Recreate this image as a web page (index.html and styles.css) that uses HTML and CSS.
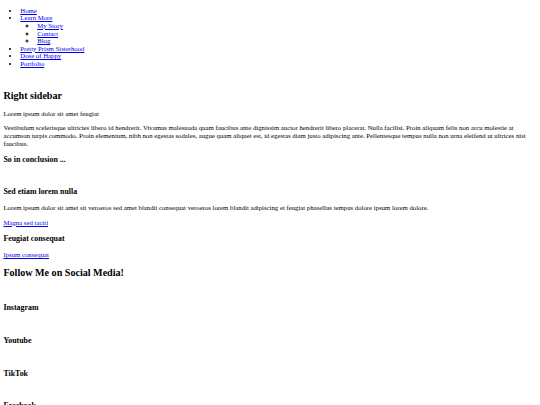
FILE: index.html
```html
<!DOCTYPE html>
<html lang="en">
  <head>
    <meta charset="UTF-8" />
    <meta name="viewport" content="width=device-width, initial-scale=1.0" />
    <title>Right sidebar</title>
    <link rel="stylesheet" href="styles.css">
  </head>
  <body>
    <header class="top">
      <nav class="nav">
        <ul>
          <li><a href="#">Home</a></li>
          <li>
            <a href="#">Learn More</a>
            <ul>
              <li><a href="#">My Story</a></li>
              <li><a href="#">Contact</a></li>
              <li><a href="#">Blog</a></li>
            </ul>
          </li>
          <li><a href="#">Pretty Prism Sisterhood</a></li>
          <li><a href="#">Dose of Happy</a></li>
          <li><a href="#">Portfolio</a></li>
        </ul>
      </nav>
    </header>
    <main class="page">
      <section class="content">
        <h2>Right sidebar</h2>
        <p>Lorem ipsum dolor sit amet feugiat</p>
        <p>Vestibulum scelerisque ultricies libero id hendrerit. Vivamus malesuada quam faucibus ante dignissim auctor hendrerit libero placerat. Nulla facilisi. Proin aliquam felis non arcu molestie at accumsan turpis commodo. Proin elementum, nibh non egestas sodales, augue quam aliquet est, id egestas diam justo adipiscing ante. Pellentesque tempus nulla non urna eleifend ut ultrices nisi faucibus.</p>
        <h3>So in conclusion ...</h3>
      </section>
      <section class="sidebar">
        <h3>Sed etiam lorem nulla</h3>
        <p>Lorem ipsum dolor sit amet sit veroeros sed amet blandit consequat veroeros lorem blandit adipiscing et feugiat phasellus tempus dolore ipsum lorem dolore.</p>
        <p><a href="#">Magna sed taciti</a></p>
        <h3>Feugiat consequat</h3>
        <p><a href="#">Ipsum consequat</a></p>
      </section>
    </main>
    <footer class="social">
      <h2>Follow Me on Social Media!</h2>
      <div class="social-item"><h3>Instagram</h3></div>
      <div class="social-item"><h3>Youtube</h3></div>
      <div class="social-item"><h3>TikTok</h3></div>
      <div class="social-item"><h3>Facebook</h3></div>
    </footer>
  </body>
</html>
```

FILE: styles.css
```css
body {
  margin: 0 3.4px 3.4px;
  font-family: "Liberation Serif", "Times New Roman", serif;
  font-size: 6.75px;
  line-height: 7.6px;
  color: #000;
}
p {
  margin: 6.75px 0;
}
h2 {
  font-size: 10.1px;
  line-height: 11.4px;
  margin: 8.4px 0;
}
h3 {
  font-size: 7.9px;
  line-height: 9.2px;
  margin: 7.9px 0;
}
a {
  color: #0000ee;
}
.nav ul {
  margin: 6.75px 0;
  padding-left: 16.9px;
}
.nav ul ul {
  margin: 0;
}
.page {
  margin-top: 22.75px;
}
.sidebar {
  margin-top: 23.05px;
}
.social-item h3 {
  margin: 23.5px 0;
}
.social-item:first-of-type h3 {
  margin-top: 24.5px;
}
```
